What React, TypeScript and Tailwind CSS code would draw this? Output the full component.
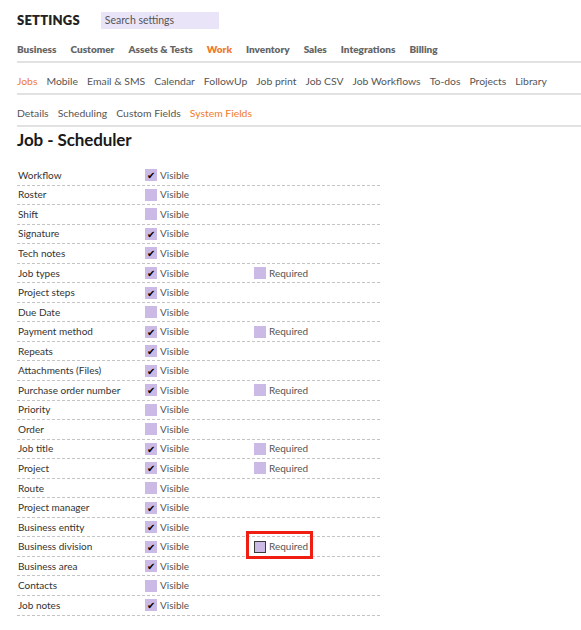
import React from 'react';

const TOP_NAV = ['Business', 'Customer', 'Assets & Tests', 'Work', 'Inventory', 'Sales', 'Integrations', 'Billing'];
const JOB_NAV = ['Jobs', 'Mobile', 'Email & SMS', 'Calendar', 'FollowUp', 'Job print', 'Job CSV', 'Job Workflows', 'To-dos', 'Projects', 'Library'];
const SUB_NAV = ['Details', 'Scheduling', 'Custom Fields', 'System Fields'];

type Field = { name: string; visible: boolean; required?: boolean; highlight?: boolean };

const FIELDS: Field[] = [
  { name: 'Workflow', visible: true },
  { name: 'Roster', visible: false },
  { name: 'Shift', visible: false },
  { name: 'Signature', visible: true },
  { name: 'Tech notes', visible: true },
  { name: 'Job types', visible: true, required: false },
  { name: 'Project steps', visible: true },
  { name: 'Due Date', visible: false },
  { name: 'Payment method', visible: true, required: false },
  { name: 'Repeats', visible: true },
  { name: 'Attachments (Files)', visible: true },
  { name: 'Purchase order number', visible: true, required: false },
  { name: 'Priority', visible: false },
  { name: 'Order', visible: false },
  { name: 'Job title', visible: true, required: false },
  { name: 'Project', visible: true, required: false },
  { name: 'Route', visible: false },
  { name: 'Project manager', visible: true },
  { name: 'Business entity', visible: true },
  { name: 'Business division', visible: true, required: false, highlight: true },
  { name: 'Business area', visible: true },
  { name: 'Contacts', visible: false },
  { name: 'Job notes', visible: true },
];

function Box({ checked, outlined }: { checked: boolean; outlined?: boolean }) {
  return (
    <span
      className={
        'inline-flex h-[12px] w-[12px] shrink-0 items-center justify-center bg-[#cbb9e6] text-[10px] leading-none text-black ' +
        (outlined ? 'border border-[#3a3a3a]' : '')
      }
    >
      {checked ? '✔' : ''}
    </span>
  );
}

export default function App() {
  return (
    <div className="min-h-[630px] bg-white pl-[17px] text-[#333]" style={{ fontFamily: 'Lato, "Open Sans", sans-serif' }}>
      <header className="flex h-[31px] items-center gap-[21px] pt-[10px]">
        <h1 className="text-[13px] font-extrabold tracking-[0.2px] text-[#222]">SETTINGS</h1>
        <div className="flex h-[17px] w-[118px] items-center bg-[#e9e4f8] px-[4px] text-[10.5px] text-[#555]">Search settings</div>
      </header>

      <nav className="flex h-[32px] items-start gap-[14px] border-b-2 border-[#e2e2e2] pt-[11px] text-[10px] font-extrabold leading-[14px] text-[#666]">
        {TOP_NAV.map((n) => (
          <span key={n} className={n === 'Work' ? 'text-[#f07a2a]' : ''}>{n}</span>
        ))}
      </nav>

      <nav className="flex h-[32px] items-start gap-[9px] border-b-2 border-[#e2e2e2] pt-[11px] text-[10.4px] leading-[14px] text-[#555]">
        {JOB_NAV.map((n) => (
          <span key={n} className={n === 'Jobs' ? 'text-[#f07a2a]' : ''}>{n}</span>
        ))}
      </nav>

      <nav className="flex h-[32px] items-start gap-[9px] border-b-2 border-[#e2e2e2] pt-[11px] text-[10.4px] leading-[14px] text-[#555]">
        {SUB_NAV.map((n) => (
          <span key={n} className={n === 'System Fields' ? 'text-[#f07a2a]' : ''}>{n}</span>
        ))}
      </nav>

      <h2 className="mt-[3px] text-[17px] font-bold leading-[20px] tracking-[-0.1px] text-[#1a1a1a]">Job - Scheduler</h2>

      <div className="mt-[16px] w-[363px]">
        {FIELDS.map((f) => (
          <div key={f.name} className="flex h-[19.55px] items-center border-b border-dashed border-[#c4c4c4] text-[10px]">
            <div className="w-[128px] pl-[1px] text-[#333]">{f.name}</div>
            <div className="flex w-[109px] items-center gap-[3px] text-[#555]">
              <Box checked={f.visible} />
              <span>Visible</span>
            </div>
            {f.required !== undefined && (
              <div className="relative flex items-center gap-[3px] text-[#555]">
                <Box checked={f.required} outlined={f.highlight} />
                <span>Required</span>
                {f.highlight && (
                  <span className="pointer-events-none absolute left-[-8px] top-[-8px] h-[28px] w-[67px] border-[3px] border-[#f01e12]" />
                )}
              </div>
            )}
          </div>
        ))}
      </div>
    </div>
  );
}
